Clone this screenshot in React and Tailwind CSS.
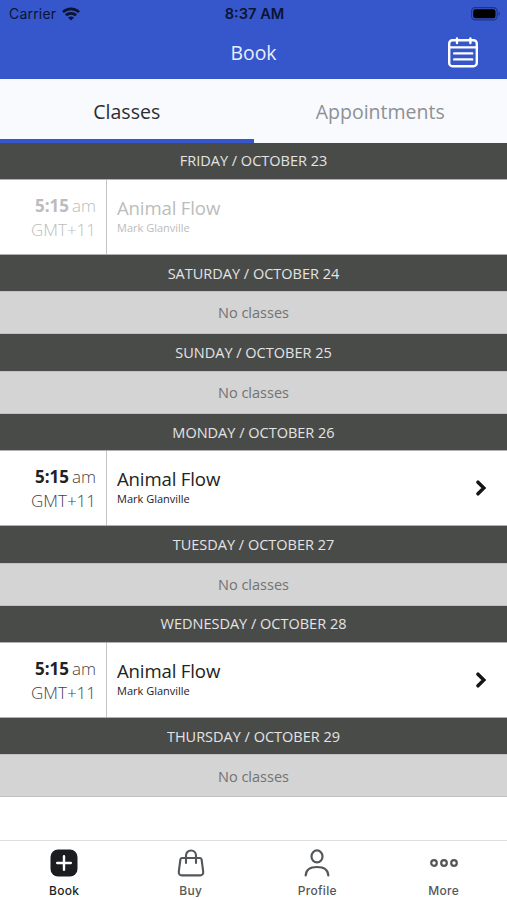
import { useState } from 'react';
import clsx from 'clsx';

const schedule = [
  { day: 'FRIDAY / OCTOBER 23', session: { past: true } },
  { day: 'SATURDAY / OCTOBER 24' },
  { day: 'SUNDAY / OCTOBER 25' },
  { day: 'MONDAY / OCTOBER 26', session: { past: false } },
  { day: 'TUESDAY / OCTOBER 27' },
  { day: 'WEDNESDAY / OCTOBER 28', session: { past: false } },
  { day: 'THURSDAY / OCTOBER 29' },
];

const WifiIcon = () => (
  <svg className="h-[14px] w-[18px]" viewBox="0 0 18 14" fill="none" stroke="currentColor" strokeWidth="2.7">
    <path d="M1 5.1c4.5-4.4 11.5-4.4 16 0" />
    <path d="M3.9 8.3c2.9-2.7 7.3-2.7 10.2 0" />
    <path d="M9 13.6 6 10.6c1.7-1.5 4.3-1.5 6 0z" fill="currentColor" stroke="none" />
  </svg>
);

const BatteryIcon = () => (
  <svg className="h-[14px] w-[30px]" viewBox="0 0 30 14">
    <rect x="0.6" y="0.6" width="25.5" height="12.3" rx="3.6" fill="none" stroke="#21347f" strokeWidth="1.1" />
    <rect x="2.2" y="2.2" width="22.3" height="9.1" rx="2.2" fill="#000" />
    <path d="M27.6 4.8c1.7.7 1.7 3.3 0 4z" fill="#21347f" />
  </svg>
);

const CalendarIcon = () => (
  <svg className="h-[32px] w-[32px]" viewBox="0 0 32 32" fill="none" stroke="currentColor" strokeWidth="2.4" strokeLinecap="round">
    <rect x="2.2" y="3.2" width="27.6" height="26" rx="3.2" />
    <path d="M2.2 10.4h27.6M10 1.4v4.6M23.4 1.4v4.6M7.2 16.4h18M7.2 22.4h18" />
  </svg>
);

const BookIcon = () => (
  <svg className="h-[28px] w-[28px]" viewBox="0 0 28 28">
    <rect x="0.5" y="0.5" width="27" height="27" rx="7.5" fill="#1b1e20" />
    <path d="M14 7.2v13.6M7.2 14h13.6" stroke="#fff" strokeWidth="2.4" strokeLinecap="round" />
  </svg>
);

const BagIcon = () => (
  <svg className="h-[28px] w-[28px]" viewBox="0 0 28 28" fill="none" stroke="currentColor" strokeWidth="2.1" strokeLinecap="round" strokeLinejoin="round">
    <path d="M5.2 9h17.6c1 0 1.6.6 1.8 1.5l1.6 12.2c.3 2.3-1 3.7-3 3.7H4.8c-2 0-3.3-1.4-3-3.7l1.6-12.2C3.6 9.6 4.2 9 5.2 9z" />
    <path d="M9 14V6.700c0-3 2-5.200 5-5.200s5 2.200 5 5.200V14" />
  </svg>
);

const ProfileIcon = () => (
  <svg className="h-[28px] w-[28px]" viewBox="0 0 28 28" fill="none" stroke="currentColor" strokeWidth="2.2" strokeLinecap="round">
    <ellipse cx="14" cy="7.4" rx="5.5" ry="6" />
    <path d="M2.7 26.5c.3-5.7 3.7-8.500 11.300-8.500s11 2.800 11.300 8.500" />
  </svg>
);

const MoreIcon = () => (
  <svg className="h-[28px] w-[28px]" viewBox="0 0 28 28" fill="none" stroke="currentColor" strokeWidth="2.2">
    <circle cx="4" cy="14" r="2.8" />
    <circle cx="14" cy="14" r="2.8" />
    <circle cx="24" cy="14" r="2.8" />
  </svg>
);

const navItems = [
  { label: 'Book', Icon: BookIcon },
  { label: 'Buy', Icon: BagIcon },
  { label: 'Profile', Icon: ProfileIcon },
  { label: 'More', Icon: MoreIcon },
];

const ClassRow = ({ past }) => (
  <div className={clsx('flex h-[75.8px] border-y border-[#b0b0b0] bg-white', past ? 'text-[#bcbcbc]' : 'text-[#222]')}>
    <div className="w-[107px] shrink-0 border-r border-[#c4c4c4] pr-[10px] pt-[14px] text-right text-[17px] leading-[24px]">
      <p className="whitespace-nowrap">
        <span className="font-bold">5:15</span>
        <span className={clsx('ml-[3px] font-light', !past && 'text-[#444]')}>am</span>
      </p>
      <p className={clsx('font-light', !past && 'text-[#444]')}>GMT+11</p>
    </div>
    <div className="flex-1 pl-[10px] pt-[16px]">
      <p className="text-[18.6px] leading-[24px] tracking-[-0.15px]">Animal Flow</p>
      <p className="text-[11px] leading-[15px]">Mark Glanville</p>
    </div>
    {!past && (
      <svg className="mr-[20px] h-[16px] w-[12px] self-center" viewBox="0 0 12 16" fill="none" stroke="#161616" strokeWidth="3.5">
        <path d="M3 2.2 8.8 8 3 13.8" strokeLinecap="round" />
      </svg>
    )}
  </div>
);

const App = () => {
  const [tab, setTab] = useState('Classes');

  return (
    <div className="flex h-[900px] w-[507px] flex-col overflow-hidden bg-white font-['Open_Sans','Noto_Sans',sans-serif]">
      <header className="h-[79px] shrink-0 bg-[#3656cc]">
        <div className="grid h-[27px] grid-cols-3 items-center pl-[8px] pr-[6px] font-['Inter',sans-serif] text-[14px] text-[#0b1433]">
          <div className="flex items-center gap-[6px] pl-px">
            <span className="tracking-[0.2px]">Carrier</span>
            <WifiIcon />
          </div>
          <span className="pt-[2px] text-center text-[14.6px] font-semibold">8:37 AM</span>
          <div className="flex justify-end">
            <BatteryIcon />
          </div>
        </div>
        <div className="grid h-[52px] grid-cols-3 items-center px-[28px] text-white">
          <span />
          <h1 className="text-center text-[19.4px] text-[#e9edfc]">Book</h1>
          <button type="button" aria-label="Calendar" className="justify-self-end">
            <CalendarIcon />
          </button>
        </div>
      </header>

      <div className="grid h-[63.5px] shrink-0 grid-cols-2 bg-[#f8fafd] text-[19.5px]">
        {['Classes', 'Appointments'].map((name) => (
          <button
            key={name}
            type="button"
            onClick={() => setTab(name)}
            className={clsx('border-b-4 pt-[5px]', tab === name ? 'border-[#3656cc] text-[#2c2d30]' : 'border-transparent text-[#8d9096]')}
          >
            {name}
          </button>
        ))}
      </div>

      <main className="flex-1">
        {schedule.map(({ day, session }) => (
          <section key={day}>
            <h2 className="flex h-[36.5px] items-center justify-center bg-[#494b49] pt-px text-[14.5px] text-[#e4e4e4]">{day}</h2>
            {session ? (
              <ClassRow past={session.past} />
            ) : (
              <p className="flex h-[43px] items-center justify-center border-y border-[#c2c2c2] bg-[#d4d4d4] pt-px text-[14.5px] text-[#727272]">
                No classes
              </p>
            )}
          </section>
        ))}
      </main>

      <nav className="grid h-[60px] shrink-0 grid-cols-4 border-t border-[#dedede] bg-white pl-px font-['Inter',sans-serif]">
        {navItems.map(({ label, Icon }, i) => (
          <button
            key={label}
            type="button"
            className={clsx('flex flex-col items-center pt-[8px]', i === 0 ? 'text-[#1b1e20]' : 'text-[#54575a]')}
          >
            <Icon />
            <span className="mt-[5px] text-[12px] font-medium leading-[18px] tracking-[0.3px]">{label}</span>
          </button>
        ))}
      </nav>
    </div>
  );
};

export default App;
